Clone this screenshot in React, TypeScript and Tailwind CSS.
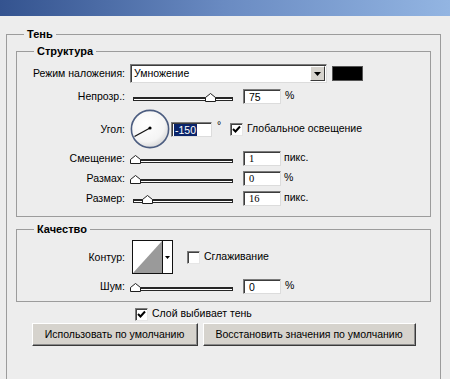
import React from "react";

const Handle = ({ c }: { c: number }) => (
  <svg
    className="absolute top-[3px]"
    style={{ left: c - 5.5 }}
    width="11"
    height="9"
    viewBox="0 0 11 9"
  >
    <path d="M0.5 8.5 L0.5 4.5 L5.5 0.5 L10.5 4.5 L10.5 8.5 Z" fill="#ffffff" stroke="#1f1f1f" strokeWidth="1" />
  </svg>
);

const Slider = ({ c }: { c: number }) => (
  <div className="relative w-[106px] h-[12px] shrink-0">
    <div className="absolute left-[3px] top-[7px] w-[100px] h-[4px] border border-[#262626] border-t-2 bg-white" />
    <Handle c={c} />
  </div>
);

const Field = ({
  value,
  serif,
  w = "w-[38px]",
}: {
  value: string;
  serif?: boolean;
  w?: string;
}) => (
  <div
    className={`${w} h-[15px] shrink-0 bg-white border border-t-[#7b7b7b] border-l-[#7b7b7b] border-r-[#dcdcdc] border-b-[#dcdcdc] shadow-[inset_1px_1px_0_#3c3c3c] pl-[5px] pt-[1px] text-[10.5px] leading-[12px] text-black ${
      serif ? "font-['Liberation_Serif',serif]" : ""
    }`}
  >
    {value}
  </div>
);

const Checkbox = ({ checked }: { checked?: boolean }) => (
  <div className="w-[13px] h-[13px] shrink-0 bg-white border border-t-[#7b7b7b] border-l-[#7b7b7b] border-r-[#e6e6e6] border-b-[#e6e6e6] shadow-[inset_1px_1px_0_#404040] flex items-center justify-center">
    {checked && (
      <svg width="9" height="9" viewBox="0 0 9 9">
        <path d="M1 4 L3.5 6.5 L8 1.5" fill="none" stroke="#000" strokeWidth="2" />
      </svg>
    )}
  </div>
);

const Label = ({ children }: { children: React.ReactNode }) => (
  <div className="w-[108px] shrink-0 text-right text-[10.5px] leading-[13px] text-black">{children}</div>
);

const Group = ({
  title,
  className,
  children,
}: {
  title: string;
  className?: string;
  children: React.ReactNode;
}) => (
  <div className={`relative border border-[#9c9c9c] ${className ?? ""}`}>
    <div className="absolute left-[17px] -top-[8px] px-[3px] bg-[#ededed] text-[11px] leading-[14px] font-bold text-black">
      {title}
    </div>
    {children}
  </div>
);

const Button = ({ w, children }: { w: string; children: React.ReactNode }) => (
  <div
    className={`${w} h-[23px] bg-[#d6d3cd] border border-t-white border-l-white border-r-[#3a3a3a] border-b-[#3a3a3a] shadow-[inset_-1px_-1px_0_#8a8a8a] flex items-center justify-center text-[10.5px] text-black`}
  >
    {children}
  </div>
);

export default function App() {
  return (
    <div className="w-[450px] h-[379px] overflow-hidden bg-[#ededed] font-['Liberation_Sans',Arial,sans-serif] text-black">
      <div className="h-[16px] bg-gradient-to-r from-[#34538f] via-[#6a8bc2] to-[#93b5e2]" />
      <Group title="Тень" className="mt-[18px] ml-[6px] w-[435px] h-[400px]">
        <div className="px-[9px] pt-[16px]">
          <Group title="Структура" className="h-[166px]">
            <div className="pt-[12px]">
              {/* Row 1 */}
              <div className="flex items-center h-[19px]">
                <Label>Режим наложения:</Label>
                <div className="ml-[5px] w-[197px] h-[19px] bg-white border border-t-[#7b7b7b] border-l-[#7b7b7b] border-r-[#dcdcdc] border-b-[#dcdcdc] shadow-[inset_1px_1px_0_#3c3c3c] flex items-center">
                  <span className="pl-[3px] text-[10.5px] flex-1">Умножение</span>
                  <div className="w-[15px] h-[15px] mr-[1px] bg-[#d6d3cd] border border-t-white border-l-white border-r-[#3a3a3a] border-b-[#3a3a3a] flex items-center justify-center">
                    <svg width="7" height="4" viewBox="0 0 7 4">
                      <path d="M0 0 H7 L3.5 4 Z" fill="#000" />
                    </svg>
                  </div>
                </div>
                <div className="ml-[5px] w-[31px] h-[15px] bg-black border border-[#555]" />
              </div>
              {/* Row 2 */}
              <div className="flex items-center h-[18px] mt-[4px]">
                <Label>Непрозр.:</Label>
                <div className="ml-[5px] flex items-center">
                  <Slider c={80} />
                  <div className="ml-[7px]">
                    <Field value="75" />
                  </div>
                  <span className="ml-[4px] text-[10.5px]">%</span>
                </div>
              </div>
              {/* Row 3 */}
              <div className="flex items-center h-[38px] mt-[5px]">
                <Label>Угол:</Label>
                <svg className="ml-[5px] shrink-0" width="40" height="40" viewBox="0 0 40 40">
                  <defs>
                    <radialGradient id="dg" cx="0.4" cy="0.35" r="0.7">
                      <stop offset="0" stopColor="#ffffff" />
                      <stop offset="0.7" stopColor="#f4f4f4" />
                      <stop offset="1" stopColor="#d4d4d4" />
                    </radialGradient>
                  </defs>
                  <circle cx="20" cy="20" r="18.6" fill="url(#dg)" stroke="#4c5d80" strokeWidth="1.6" />
                  <line x1="20" y1="19" x2="4.5" y2="27.5" stroke="#111" strokeWidth="1.3" />
                  <circle cx="20" cy="19" r="1.6" fill="#000" />
                </svg>
                <div className="ml-[1px] w-[41px] h-[15px] shrink-0 bg-white border border-t-[#7b7b7b] border-l-[#7b7b7b] border-r-[#dcdcdc] border-b-[#dcdcdc] shadow-[inset_1px_1px_0_#3c3c3c] pl-[2px] pt-[1px] flex">
                  <span className="bg-[#0a246a] text-white text-[10.5px] leading-[12px] px-[1px]">-150</span>
                </div>
                <span className="ml-[5px] w-[8px] text-[10.5px] -mt-[6px]">°</span>
                <div className="ml-[5px]">
                  <Checkbox checked />
                </div>
                <span className="ml-[4px] text-[10.5px]">Глобальное освещение</span>
              </div>
              {/* Rows 4-6 */}
              {[
                { l: "Смещение:", c: 5, v: "1", u: "пикс." },
                { l: "Размах:", c: 5, v: "0", u: "%" },
                { l: "Размер:", c: 17, v: "16", u: "пикс." },
              ].map((r) => (
                <div key={r.l} className="flex items-center h-[20px]">
                  <Label>{r.l}</Label>
                  <div className="ml-[5px] flex items-center">
                    <Slider c={r.c} />
                    <div className="ml-[7px]">
                      <Field value={r.v} serif />
                    </div>
                    <span className="ml-[3px] text-[10.5px]">{r.u}</span>
                  </div>
                </div>
              ))}
            </div>
          </Group>
          <Group title="Качество" className="mt-[12px] h-[73px]">
            <div className="pt-[10px]">
              <div className="flex items-center h-[34px]">
                <Label>Контур:</Label>
                <div className="ml-[7px] w-[41px] h-[34px] border border-[#111] bg-white flex">
                  <svg width="29" height="32" viewBox="0 0 29 32" className="shrink-0">
                    <path d="M0 32 L29 0 L29 32 Z" fill="#9a9a9a" />
                  </svg>
                  <div className="w-[10px] border-l border-[#111] flex items-center justify-center">
                    <svg width="5" height="3" viewBox="0 0 5 3">
                      <path d="M0 0 H5 L2.5 3 Z" fill="#000" />
                    </svg>
                  </div>
                </div>
                <div className="ml-[14px]">
                  <Checkbox />
                </div>
                <span className="ml-[4px] text-[10.5px]">Сглаживание</span>
              </div>
              <div className="flex items-center h-[20px] mt-[2px]">
                <Label>Шум:</Label>
                <div className="ml-[5px] flex items-center">
                  <Slider c={5} />
                  <div className="ml-[7px]">
                    <Field value="0" />
                  </div>
                  <span className="ml-[4px] text-[10.5px]">%</span>
                </div>
              </div>
            </div>
          </Group>
        </div>
        <div className="mt-[4px] h-[16px] flex items-center pl-[128px]">
          <Checkbox checked />
          <span className="ml-[4px] text-[10.5px]">Слой выбивает тень</span>
        </div>
        <div className="mt-[1px] flex justify-center gap-[5px]">
          <Button w="w-[166px]">Использовать по умолчанию</Button>
          <Button w="w-[213px]">Восстановить значения по умолчанию</Button>
        </div>
      </Group>
    </div>
  );
}
